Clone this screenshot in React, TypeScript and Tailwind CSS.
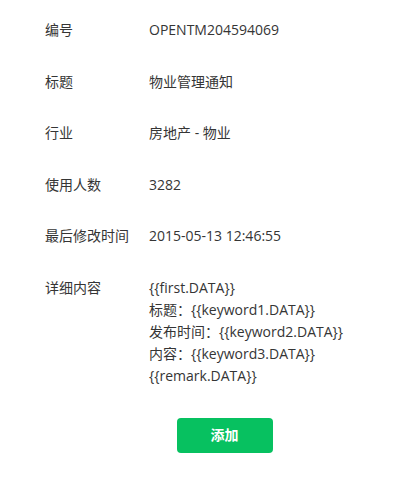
import React from "react";

const rows: { label: string; value: React.ReactNode }[] = [
  { label: "编号", value: "OPENTM204594069" },
  { label: "标题", value: "物业管理通知" },
  { label: "行业", value: "房地产 - 物业" },
  { label: "使用人数", value: "3282" },
  { label: "最后修改时间", value: "2015-05-13 12:46:55" },
];

const detail = [
  "{{first.DATA}}",
  "标题：{{keyword1.DATA}}",
  "发布时间：{{keyword2.DATA}}",
  "内容：{{keyword3.DATA}}",
  "{{remark.DATA}}",
];

export default function App() {
  return (
    <div
      className="w-[415px] h-[489px] bg-white text-[#353535] text-[14px] leading-[22px] pt-[19px]"
      style={{ fontFamily: '"Open Sans", "Noto Sans CJK SC", sans-serif' }}
    >
      <div className="flex flex-col gap-[29.5px] pl-[45px]">
        {rows.map((r) => (
          <div key={r.label} className="grid grid-cols-[104px_1fr]">
            <div>{r.label}</div>
            <div>{r.value}</div>
          </div>
        ))}
        <div className="grid grid-cols-[104px_1fr]">
          <div>详细内容</div>
          <div className="flex flex-col">
            {detail.map((d) => (
              <div key={d}>{d}</div>
            ))}
          </div>
        </div>
      </div>
      <div className="flex justify-center mt-[31px] pl-[34px]">
        <button className="w-[96px] h-[35px] rounded-[4px] bg-[#07c160] text-white text-[14px] font-semibold">
          添加
        </button>
      </div>
    </div>
  );
}
